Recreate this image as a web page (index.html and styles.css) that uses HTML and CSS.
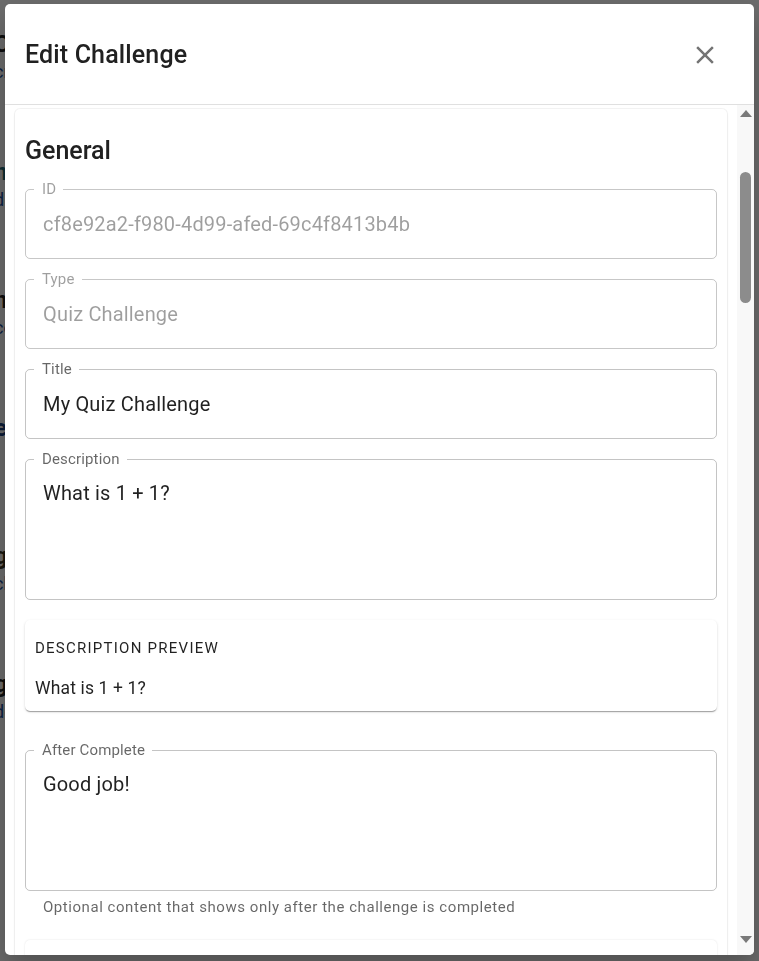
FILE: index.html
```html
<!DOCTYPE html>
<html lang="en">
<head>
<meta charset="utf-8">
<title>Edit Challenge</title>
<link rel="stylesheet" href="styles.css">
</head>
<body>
<main class="page">
  <div class="bg-item"><div class="bg-title">Challenges</div><div class="bg-sub">create and manage</div></div>
  <div class="bg-item"><div class="bg-title teal">nature walk</div><div class="bg-sub">discover the park</div></div>
  <div class="bg-item"><div class="bg-title">math quiz</div><div class="bg-sub">count it up</div></div>
  <div class="bg-item"><div class="bg-title blue">explore</div><div class="bg-sub"></div></div>
  <div class="bg-item"><div class="bg-title gold">game</div><div class="bg-sub">check in</div></div>
  <div class="bg-item"><div class="bg-title">guess</div><div class="bg-sub">do it</div></div>
</main>

<div class="backdrop">
  <section class="dialog" role="dialog" aria-labelledby="dlg-title">
    <header class="dialog-header">
      <h2 id="dlg-title" class="dialog-title">Edit Challenge</h2>
      <button class="close-btn" aria-label="close">
        <svg viewBox="0 0 24 24" width="30" height="30"><path d="M19 6.41 17.59 5 12 10.59 6.41 5 5 6.41 10.59 12 5 17.59 6.41 19 12 13.41 17.59 19 19 17.59 13.41 12z"/></svg>
      </button>
    </header>
    <div class="dialog-body">
      <div class="scroll">
        <div class="card">
          <h3 class="section-title">General</h3>

          <fieldset class="field disabled first">
            <legend>ID</legend>
            <div class="value">cf8e92a2-f980-4d99-afed-69c4f8413b4b</div>
          </fieldset>

          <fieldset class="field disabled">
            <legend>Type</legend>
            <div class="value">Quiz Challenge</div>
          </fieldset>

          <fieldset class="field">
            <legend>Title</legend>
            <div class="value">My Quiz Challenge</div>
          </fieldset>

          <fieldset class="field">
            <legend>Description</legend>
            <div class="value multi">What is 1 + 1?</div>
          </fieldset>

          <div class="preview">
            <div class="overline">Description Preview</div>
            <div class="preview-text">What is 1 + 1?</div>
          </div>

          <fieldset class="field after">
            <legend>After Complete</legend>
            <div class="value multi">Good job!</div>
          </fieldset>
          <p class="helper">Optional content that shows only after the challenge is completed</p>

          <div class="preview next"></div>
        </div>
      </div>
      <div class="scrollbar" aria-hidden="true">
        <div class="sb-btn"><svg width="12" height="8" viewBox="0 0 12 8"><polygon points="6,0 12,7 0,7"/></svg></div>
        <div class="sb-track"><div class="sb-thumb"></div></div>
        <div class="sb-btn down"><svg width="12" height="8" viewBox="0 0 12 8"><polygon points="0,0 12,0 6,7"/></svg></div>
      </div>
    </div>
  </section>
</div>
</body>
</html>
```

FILE: styles.css
```css
* { box-sizing: border-box; }

html, body {
  margin: 0;
  height: 100%;
}

body {
  font-family: Roboto, "Liberation Sans", Arial, sans-serif;
  background: #ffffff;
  overflow: hidden;
}

/* underlying page (dimmed by backdrop) */
.page {
  padding-top: 28px;
  margin-left: -6px;
}
.bg-item {
  height: 128px;
}
.bg-title {
  font-size: 24px;
  font-weight: 700;
  line-height: 32px;
  color: #222;
}
.bg-title.teal { color: #1f6b7a; }
.bg-title.blue { color: #1a3f80; }
.bg-title.gold { color: #3a3320; }
.bg-sub {
  font-size: 18px;
  line-height: 24px;
  color: #1d4f9c;
}

/* modal */
.backdrop {
  position: fixed;
  inset: 0;
  background: rgba(0, 0, 0, 0.58);
  display: flex;
  justify-content: center;
  align-items: flex-start;
  padding-top: 4px;
}

.dialog {
  width: 749px;
  height: 951px;
  background: #fff;
  border-radius: 5px;
  display: flex;
  flex-direction: column;
  overflow: hidden;
  box-shadow: 0 14px 28px rgba(0,0,0,0.25);
}

.dialog-header {
  flex: none;
  height: 101px;
  display: flex;
  align-items: center;
  justify-content: space-between;
  padding: 1px 34px 0 20px;
  border-bottom: 1px solid #e0e0e0;
}

.dialog-title {
  margin: 0;
  font-size: 25px;
  font-weight: 500;
  line-height: 40px;
  color: #212121;
  letter-spacing: 0.15px;
}

.close-btn {
  border: 0;
  background: none;
  padding: 0;
  width: 30px;
  height: 30px;
  display: flex;
  cursor: pointer;
}
.close-btn svg { fill: rgba(0,0,0,0.54); }

.dialog-body {
  flex: 1;
  min-height: 0;
  display: flex;
}

.scroll {
  flex: 1;
  min-width: 0;
  overflow: hidden;
  padding: 4px 10px 0 10px;
}

.card {
  background: #fff;
  border-radius: 5px;
  padding: 22px 10px 20px;
  display: flex;
  flex-direction: column;
  box-shadow: 0 0 0 1px rgba(0,0,0,0.045), 0 1px 3px rgba(0,0,0,0.06);
}

.section-title {
  margin: 0;
  font-size: 25px;
  font-weight: 500;
  line-height: 40px;
  color: #212121;
}

.field {
  margin: 12px 0 0;
  padding: 0 17px;
  min-width: 0;
  border: 1px solid rgba(0,0,0,0.23);
  border-radius: 5px;
}
.field.first { margin-top: 10px; }
.field.after { margin-top: 31px; }

.field legend {
  margin-left: -9px;
  padding: 0 7px 0 8px;
  font-size: 15px;
  line-height: 16px;
  letter-spacing: 0.15px;
  color: rgba(0,0,0,0.6);
}

.value {
  font-size: 20px;
  line-height: 24px;
  padding: 15px 0 22px;
  letter-spacing: 0.17px;
  color: rgba(0,0,0,0.87);
  white-space: nowrap;
}
.value.multi {
  padding: 14px 0 94px;
}

.field.disabled { border-color: rgba(0,0,0,0.22); }
.field.disabled legend,
.field.disabled .value { color: rgba(0,0,0,0.38); }

.preview {
  margin-top: 20px;
  padding: 10px;
  background: #fff;
  border-radius: 5px;
  box-shadow: 0 2px 1px -1px rgba(0,0,0,0.2), 0 1px 1px 0 rgba(0,0,0,0.14), 0 1px 3px 0 rgba(0,0,0,0.12);
}

.overline {
  font-size: 15px;
  line-height: 36px;
  letter-spacing: 1.25px;
  text-transform: uppercase;
  color: rgba(0,0,0,0.87);
}

.preview-text {
  margin-top: 10px;
  font-size: 17.5px;
  line-height: 25px;
  letter-spacing: 0.15px;
  color: rgba(0,0,0,0.87);
}

.helper {
  margin: 4px 18px 0;
  font-size: 15px;
  line-height: 25px;
  letter-spacing: 0.55px;
  color: rgba(0,0,0,0.6);
}

.preview.next {
  height: 120px;
  box-shadow: 0 0 2px rgba(0,0,0,0.12);
}

/* scrollbar */
.scrollbar {
  flex: none;
  width: 17px;
  background: #f8f8f8;
  display: flex;
  flex-direction: column;
}
.sb-btn {
  flex: none;
  height: 17px;
  display: flex;
  align-items: center;
  justify-content: center;
}
.sb-btn.down { height: 21px; align-items: flex-start; padding-top: 2px; }
.sb-btn svg { fill: #7a7a7a; }
.sb-track {
  flex: 1;
  padding-top: 50px;
}
.sb-thumb {
  width: 11px;
  height: 131px;
  margin: 0 auto;
  border-radius: 6px;
  background: #8c8c8c;
}
```
